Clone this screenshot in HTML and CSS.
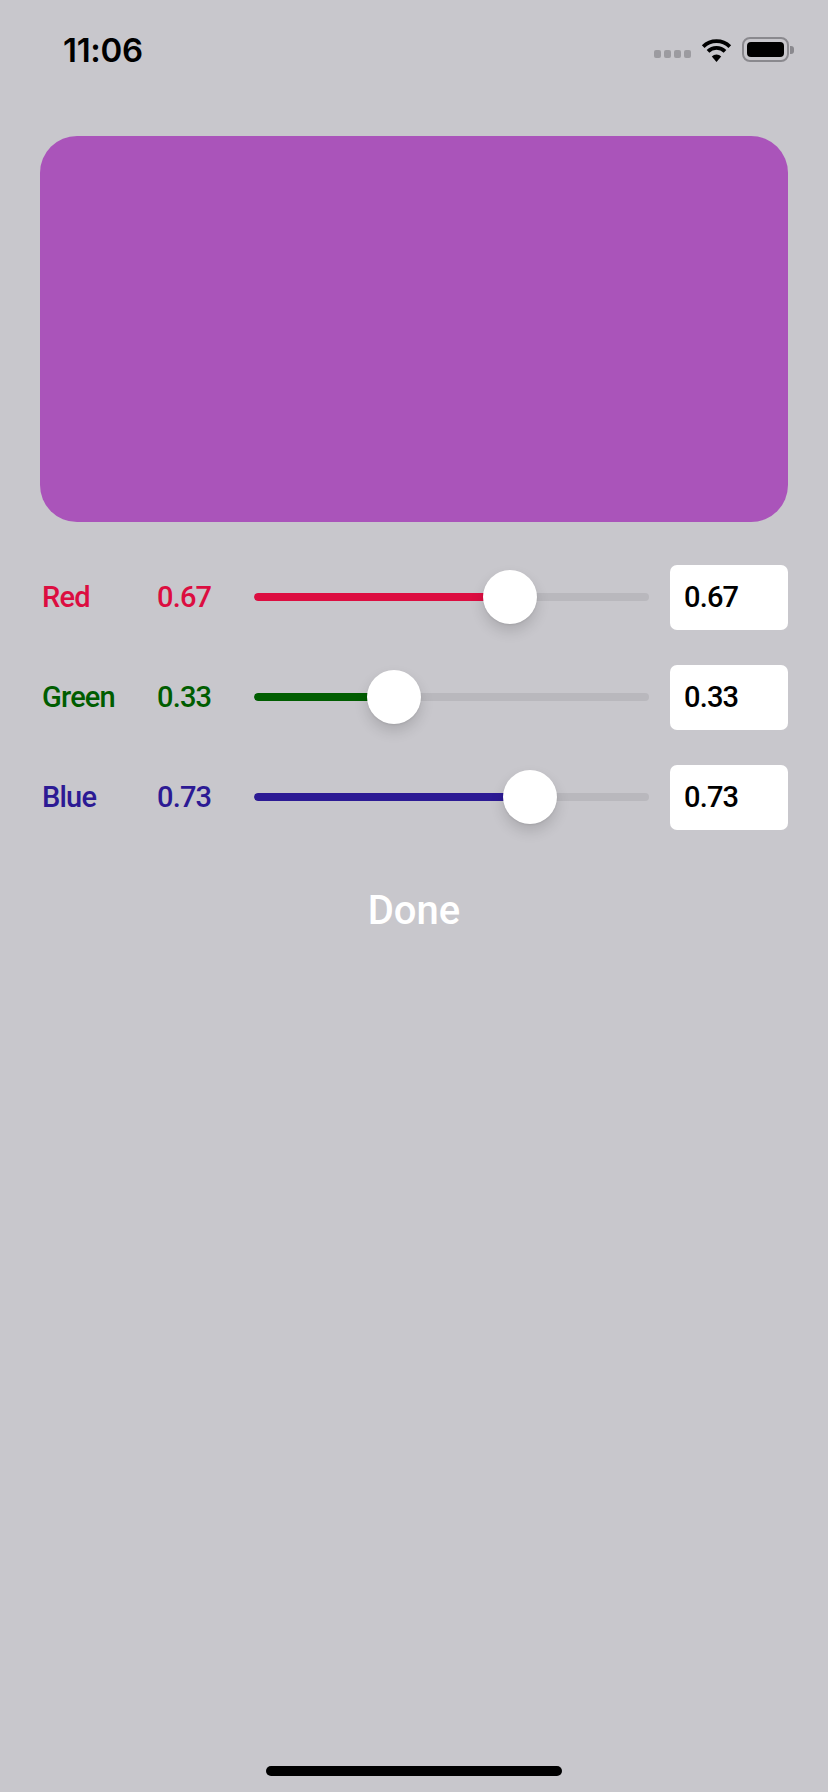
FILE: index.html
```html
<!DOCTYPE html>
<html>
<head>
<meta charset="utf-8">
<link rel="stylesheet" href="styles.css">
</head>
<body>
<div class="screen">
  <div class="status">
    <span class="time">11:06</span>
    <div class="status-icons">
      <div class="signal"><i></i><i></i><i></i><i></i></div>
      <svg class="wifi" width="31" height="24" viewBox="0 0 31 24">
        <path d="M2.2 8.6 A19 19 0 0 1 28.8 8.6" fill="none" stroke="#000" stroke-width="3.8" stroke-linecap="butt"/>
        <path d="M7 13.4 A12.2 12.2 0 0 1 24 13.4" fill="none" stroke="#000" stroke-width="3.8" stroke-linecap="butt"/>
        <path d="M15.5 24 L10.8 18.4 A6.8 6.8 0 0 1 20.2 18.4 Z" fill="#000"/>
      </svg>
      <div class="battery"><div class="battery-body"><div class="battery-fill"></div></div><div class="battery-cap"></div></div>
    </div>
  </div>

  <main class="content">
    <div class="swatch"></div>

    <div class="rows">
      <div class="row red">
        <span class="label">Red</span>
        <span class="value">0.67</span>
        <div class="slider">
          <div class="track"><div class="fill" style="width:255.5px"></div></div>
          <div class="thumb" style="left:228.5px"></div>
        </div>
        <div class="field">0.67</div>
      </div>
      <div class="row green">
        <span class="label">Green</span>
        <span class="value">0.33</span>
        <div class="slider">
          <div class="track"><div class="fill" style="width:139.5px"></div></div>
          <div class="thumb" style="left:112.5px"></div>
        </div>
        <div class="field">0.33</div>
      </div>
      <div class="row blue">
        <span class="label">Blue</span>
        <span class="value">0.73</span>
        <div class="slider">
          <div class="track"><div class="fill" style="width:276px"></div></div>
          <div class="thumb" style="left:249px"></div>
        </div>
        <div class="field">0.73</div>
      </div>
    </div>

    <div class="done">Done</div>
  </main>

  <div class="home-indicator"></div>
</div>
</body>
</html>
```

FILE: styles.css
```css
html, body {
  margin: 0;
  padding: 0;
}
body {
  background: #c8c7cc;
  font-family: Roboto, "Noto Sans", sans-serif;
}
.screen {
  width: 828px;
  height: 1792px;
  display: flex;
  flex-direction: column;
  background: #c8c7cc;
}
.status {
  height: 100px;
  display: flex;
  align-items: center;
  justify-content: space-between;
  padding: 0 34px 0 63px;
}
.time {
  font-family: Inter, "Liberation Sans", sans-serif;
  font-weight: 600;
  font-size: 33px;
  letter-spacing: -0.3px;
  color: #000;
}
.status-icons {
  display: flex;
  align-items: center;
  gap: 10px;
  margin-top: -1px;
}
.signal {
  display: flex;
  gap: 3px;
  margin-top: 9px;
}
.signal i {
  display: block;
  width: 7px;
  height: 8px;
  border-radius: 2px;
  background: #9c9ba0;
}
.wifi {
  display: block;
}
.battery {
  display: flex;
  align-items: center;
  gap: 1px;
}
.battery-body {
  width: 47px;
  height: 25px;
  box-sizing: border-box;
  border: 2px solid #8a898e;
  border-radius: 8px;
  padding: 3px;
}
.battery-fill {
  width: 100%;
  height: 100%;
  background: #000;
  border-radius: 4px;
}
.battery-cap {
  width: 4px;
  height: 8px;
  background: #8a898e;
  border-radius: 0 3px 3px 0;
}
.content {
  padding: 36px 40px 0 40px;
  flex: 1;
}
.swatch {
  width: 748px;
  height: 386px;
  border-radius: 37px;
  background: #aa54ba;
}
.rows {
  margin-top: 25px;
}
.row {
  height: 100px;
  display: grid;
  grid-template-columns: 117px 97px 395px 1fr;
  align-items: center;
  font-weight: 500;
  font-size: 29px;
  letter-spacing: -0.8px;
}
.row .label {
  padding-left: 2px;
}
.red .label, .red .value { color: #dc0d40; }
.green .label, .green .value { color: #005d00; }
.blue .label, .blue .value { color: #2c1a94; }
.red .fill { background: #dc0d40; }
.green .fill { background: #005d00; }
.blue .fill { background: #2c1a94; }

.slider {
  position: relative;
  height: 54px;
  display: flex;
  align-items: center;
}
.track {
  width: 100%;
  height: 8px;
  border-radius: 4px;
  background: #b9b8bd;
  overflow: hidden;
}
.fill {
  height: 100%;
  border-radius: 4px 0 0 4px;
}
.thumb {
  position: absolute;
  top: 0;
  width: 54px;
  height: 54px;
  border-radius: 50%;
  background: #fff;
  box-shadow: 0 7px 14px rgba(0, 0, 0, 0.14), 0 1px 2px rgba(0, 0, 0, 0.08);
}
.field {
  justify-self: end;
  height: 65px;
  width: 118px;
  box-sizing: border-box;
  background: #fff;
  border-radius: 7px;
  display: flex;
  align-items: center;
  padding-left: 14px;
  color: #000;
}
.done {
  margin-top: 41px;
  text-align: center;
  font-size: 40px;
  line-height: 46px;
  font-weight: 500;
  color: #fff;
}
.home-indicator {
  width: 296px;
  height: 10px;
  border-radius: 5px;
  background: #000;
  margin: 0 auto 16px auto;
}
```
